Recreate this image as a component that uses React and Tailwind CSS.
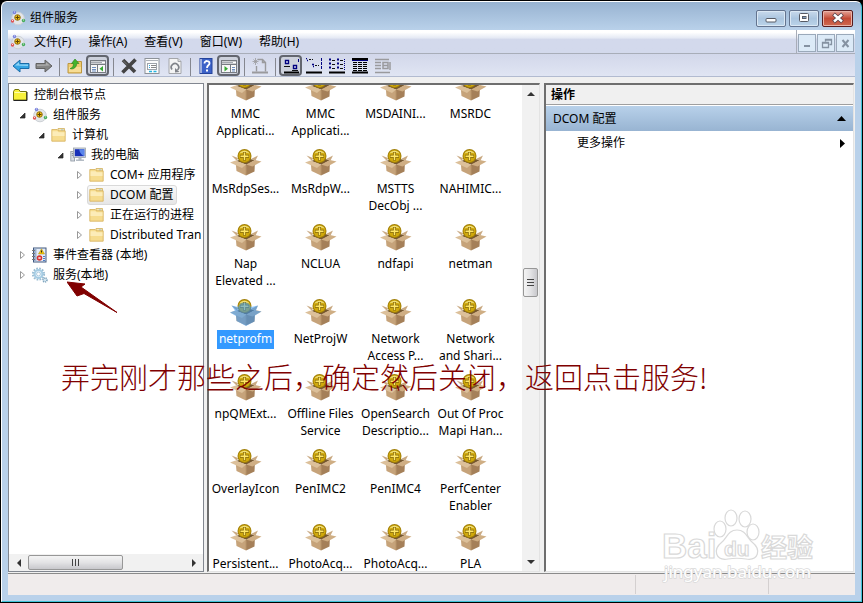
import React from 'react';

const tree = [
  { label: '控制台根节点', icon: 'root', pad: 'pl-[2px]' },
  { label: '组件服务', icon: 'component', pad: 'pl-[7px]', arrow: 'open' },
  { label: '计算机', icon: 'folder', pad: 'pl-[26px]', arrow: 'open' },
  { label: '我的电脑', icon: 'computer', pad: 'pl-[45px]', arrow: 'open' },
  { label: 'COM+ 应用程序', icon: 'folder', pad: 'pl-[64px]', arrow: 'closed' },
  { label: 'DCOM 配置', icon: 'folder', pad: 'pl-[64px]', arrow: 'closed', selected: true },
  { label: '正在运行的进程', icon: 'folder', pad: 'pl-[64px]', arrow: 'closed' },
  { label: 'Distributed Tran', icon: 'folder', pad: 'pl-[64px]', arrow: 'closed' },
  { label: '事件查看器 (本地)', icon: 'events', pad: 'pl-[7px]', arrow: 'closed' },
  { label: '服务(本地)', icon: 'gears', pad: 'pl-[7px]', arrow: 'closed' },
];

const items = [
  ['MMC', 'Applicati...'], ['MMC', 'Applicati...'], ['MSDAINI...'], ['MSRDC'],
  ['MsRdpSes...'], ['MsRdpW...'], ['MSTTS', 'DecObj ...'], ['NAHIMIC...'],
  ['Nap', 'Elevated ...'], ['NCLUA'], ['ndfapi'], ['netman'],
  ['netprofm'], ['NetProjW'], ['Network', 'Access P...'], ['Network', 'and Shari...'],
  ['npQMExt...'], ['Offline Files', 'Service'], ['OpenSearch', 'Descriptio...'], ['Out Of Proc', 'Mapi Han...'],
  ['OverlayIcon'], ['PenIMC2'], ['PenIMC4'], ['PerfCenter', 'Enabler'],
  ['Persistent...'], ['PhotoAcq...'], ['PhotoAcq...'], ['PLA'],
];

const ComponentIcon = () => (
  <svg className="w-4 h-4 shrink-0" viewBox="0 0 16 16">
    <circle cx="8" cy="8.5" r="6.3" fill="#e3e6e9" stroke="#cdd1d6" />
    <circle cx="7.5" cy="7.5" r="2.800" fill="#f2c31c" stroke="#8a6508" strokeWidth=".9" />
    <path d="M7.500 5.500v4M5.500 7.500h4" stroke="#5d4300" />
    <circle cx="4.500" cy="2.500" r="1.700" fill="#7780dd" />
    <circle cx="2.500" cy="11" r="1.700" fill="#e05858" />
    <circle cx="13.500" cy="10.500" r="1.700" fill="#45ad5a" />
    <path d="M4 2h1M2 10.500h1M13 10h1" stroke="#fff" strokeWidth=".8" />
  </svg>
);

const FolderIcon = () => (
  <svg className="w-4 h-4 shrink-0" viewBox="0 0 16 16">
    <path d="M7 1.500h6.500V13H7z" fill="#f8e8b0" stroke="#d0b05e" strokeWidth=".8" />
    <path d="M10 3h2.500" stroke="#8db8de" />
    <path d="M.8 2.500h5.400l1.200 1.300h6.800v10.400H.8z" fill="#f6dc8e" stroke="#d5b05a" strokeWidth=".8" />
    <path d="M1.500 4.200h5l1 1h6V9h-12z" fill="#fcecb8" />
  </svg>
);

const RootIcon = () => (
  <svg className="w-4 h-4 shrink-0" viewBox="0 0 16 16">
    <path d="M.5 4.500l1.300-2h4l1.400 2h6.300v8.500H.5z" fill="#f8f23a" stroke="#77770a" />
    <path d="M1.500 5.500h11" stroke="#ffffb0" />
    <path d="M.5 13.500h13.500V5" fill="none" stroke="#222" />
  </svg>
);

const ComputerIcon = () => (
  <svg className="w-4 h-4 shrink-0" viewBox="0 0 16 16">
    <rect x=".8" y="4.500" width="3.800" height="9.500" fill="#d9dee4" stroke="#8b95a0" strokeWidth=".8" />
    <path d="M1.800 6.500h1.800M1.800 8.300h1.800" stroke="#5b6875" strokeWidth=".7" />
    <rect x="3.500" y="1" width="12" height="9.500" fill="#d5dae0" stroke="#9aa2ab" strokeWidth=".8" />
    <rect x="4.800" y="2.200" width="9.500" height="7" fill="#1730b8" />
    <path d="M9 2.200h5.300v7c-2.500-1-4.500-3.500-5.300-7z" fill="#5b86ea" />
    <path d="M8.500 11h3v1.500H14V14H6v-1.500h2.500z" fill="#b4bcc5" />
  </svg>
);

const EventsIcon = () => (
  <svg className="w-4 h-4 shrink-0" viewBox="0 0 16 16">
    <rect x="1.500" y="1" width="12.500" height="14" fill="#e4ecf7" stroke="#41587f" />
    <rect x="2" y="1.500" width="2.500" height="13" fill="#9db2d0" />
    <path d="M0 3.500h3M0 6.500h3M0 9.500h3M0 12.500h3" stroke="#777" />
    <path d="M9.500 1.800l3 5.200h-6z" fill="#f5c80a" stroke="#a8860a" strokeWidth=".5" />
    <path d="M9.500 3.500v2" stroke="#222" />
    <circle cx="7.500" cy="11" r="2.800" fill="#d63434" />
    <path d="M6.500 10l2 2M8.500 10l-2 2" stroke="#fff" strokeWidth=".9" />
    <path d="M11 9.500h2M11 11.500h2M11 13.500h2" stroke="#4a7bc8" />
  </svg>
);

const GearsIcon = () => (
  <svg className="w-4 h-4 shrink-0" viewBox="0 0 16 16">
    <circle cx="6.500" cy="7" r="5.600" fill="none" stroke="#9bbdd3" strokeWidth="2" strokeDasharray="1.700 1.230" />
    <circle cx="6.500" cy="7" r="3.900" fill="#e6f3fb" stroke="#a5cce3" strokeWidth="2" />
    <circle cx="6.500" cy="7" r="1.900" fill="#fff" stroke="#86aec9" strokeWidth=".6" />
    <circle cx="13" cy="13" r="2" fill="#d7e9f3" stroke="#7fa4bd" strokeWidth="1.600" strokeDasharray="1.100 .7" />
  </svg>
);

const icons = {
  root: RootIcon,
  component: ComponentIcon,
  folder: FolderIcon,
  computer: ComputerIcon,
  events: EventsIcon,
  gears: GearsIcon,
};

const BoxIcon = () => (
  <svg className="w-8 h-[27px]" viewBox="0 0 32 27">
    <path d="M6 12l9-3 10 2-8 5z" fill="#75572f" />
    <path d="M1.500 6.500L8 9l-1 3z" fill="#c9a982" />
    <path d="M21 10l7-3.500-2.500 5z" fill="#c9a982" />
    <circle cx="14.500" cy="7" r="7" fill="#a17f08" />
    <circle cx="14.500" cy="7" r="6" fill="#cfa80c" />
    <path d="M9.500 4.500a6 6 0 0 1 10 0c-3-1.300-7-1.300-10 0z" fill="#f0e07c" />
    <path d="M14.500 3v8.500M10 7.300h9" stroke="#85690a" strokeWidth="3" />
    <path d="M14.500 3.500v7.500M10.500 7.300h8" stroke="#ffe766" strokeWidth="1.500" />
    <path d="M5.500 12L16 16v10.500L6.500 22z" fill="#c6a37a" />
    <path d="M16 16l9-4-.5 10.500-8.500 4z" fill="#a58059" />
    <path d="M0 13.500l5.500-2L16 15.500l-4 3.500z" fill="#dcc09a" />
    <path d="M16 15.500L25 11l6.500 1.500-9 5z" fill="#cfae84" />
    <path d="M16 16.500v9.500" stroke="#b8946a" />
  </svg>
);

const ToolButton = ({ label, pressed, children }) => (
  <button
    type="button"
    aria-label={label}
    className={
      pressed
        ? 'w-[23px] h-[21px] flex items-center justify-center rounded-[4px] border-2 border-[#63666f] bg-[#cdd1dc]'
        : 'w-[23px] h-[21px] flex items-center justify-center'
    }
  >
    <svg className="w-[18px] h-4 shrink-0" viewBox="0 0 18 16">{children}</svg>
  </button>
);

const Separator = () => (
  <div className="w-2 flex justify-center">
    <div className="w-px h-[18px] bg-[#85878f]"></div>
  </div>
);

const Pane = ({ dir }) => (
  <>
    <rect x="1.500" y="2.500" width="15" height="12" fill="#f8f8f8" stroke="#777b82" />
    <path d="M2 4.500h14" stroke="#a5a9b0" strokeWidth="2" />
    <path d="M13 4.500h3" stroke="#fff" />
    <path d="M2 6.500h14" stroke="#777b82" />
    {dir === 'left' ? (
      <>
        <path d="M8.500 7v8" stroke="#777b82" />
        <path d="M3 9.500h4M3 11.500h4M3 13h4" stroke="#6d8ec0" />
        <path d="M14 8v5.500l-3.500-2.700z" fill="#35a832" />
      </>
    ) : (
      <>
        <path d="M10.500 7v8" stroke="#777b82" />
        <path d="M12 9.500h3M12 11.500h3M12 13h3" stroke="#6d8ec0" />
        <path d="M4.500 8v5.500L8 10.800z" fill="#35a832" />
      </>
    )}
  </>
);

const Toolbar = () => (
  <div className="h-[23px] shrink-0 flex items-end pl-px bg-linear-to-b from-[#d2d7ea] to-[#e0e5f3] border-b border-[#b2bbd0]">
    <ToolButton label="后退">
      <path d="M1 8l7-6v3.500h9v5H8V14z" fill="#35a5e4" stroke="#196ca8" />
      <path d="M3 7.500l4-3.300v2.300h9v1.500z" fill="#8fd3f5" />
    </ToolButton>
    <ToolButton label="前进">
      <path d="M17 8l-7-6v3.500H1v5h9V14z" fill="#858585" stroke="#626262" />
      <path d="M15 7.500l-4-3.300v2.300H2v1.500z" fill="#adadad" />
    </ToolButton>
    <Separator />
    <ToolButton label="向上一级">
      <path d="M2 5.500h5l1-2h7.500V15H2z" fill="#efcc71" stroke="#bc9740" />
      <path d="M3 9h12v5H3z" fill="#f7dd94" />
      <path d="M4 10.500c2.500-.5 3.500-2.500 3.500-5H5.500L9 1l4 4.500h-2.300c0 3.500-3 6.500-6.700 5z" fill="#42b52c" stroke="#27821b" strokeWidth=".6" />
    </ToolButton>
    <ToolButton label="显示/隐藏控制台树" pressed>
      <Pane dir="left" />
    </ToolButton>
    <Separator />
    <ToolButton label="删除">
      <path d="M3 2l12 12M15.500 1.500L2.500 14.500" stroke="#444" strokeWidth="3.600" />
      <path d="M3 2.500l4 4" stroke="#777" strokeWidth="1" />
    </ToolButton>
    <ToolButton label="属性">
      <rect x="2" y=".5" width="14" height="15" fill="#fbfbfb" stroke="#8d9298" />
      <path d="M3 2.500h12" stroke="#aeb3b9" />
      <rect x="4.500" y="5.500" width="9" height="6" fill="#fff" stroke="#9da3aa" />
      <path d="M6 7.500h1M6 9.500h1" stroke="#27a7de" />
      <path d="M8 7.500h5M8 9.500h5" stroke="#888" />
      <path d="M6 13.500h3M10.500 13.500h3" stroke="#27b4e0" strokeWidth="1.500" />
    </ToolButton>
    <ToolButton label="刷新">
      <path d="M3 .5h9l3 3v12H3z" fill="#f4f4f4" stroke="#a4a6aa" />
      <path d="M12 .5v3h3" fill="#ddd" stroke="#a4a6aa" />
      <path d="M6 11.500a3.700 3.700 0 1 1 5.500.5" fill="none" stroke="#808389" strokeWidth="1.700" />
      <path d="M9 10v4.500l4.500-.5z" fill="#808389" />
    </ToolButton>
    <Separator />
    <ToolButton label="帮助">
      <rect x="3" y=".5" width="12" height="15" fill="#3c62c8" stroke="#24439a" />
      <path d="M4 1v14" stroke="#c2cde9" strokeWidth="1.500" />
      <path d="M7.500 5.500c0-3.500 5-3 5-.3C12.500 7.500 10 7 10 10" fill="none" stroke="#fff" strokeWidth="1.800" />
      <rect x="9" y="11.500" width="2" height="2" fill="#fff" />
    </ToolButton>
    <ToolButton label="显示/隐藏操作窗格" pressed>
      <Pane dir="right" />
    </ToolButton>
    <Separator />
    <ToolButton label="新建">
      <path d="M5.500 8v5.500M6.500 1.500h5l3 3v9M11.500 1.500v3h3" fill="none" stroke="#9a9a9d" strokeWidth="1.400" />
      <path d="M1 14.500h16" stroke="#9a9a9d" strokeWidth="2" />
      <path d="M4.500 0v7M1.500 3.500h6M2.500 1.500l4 4M6.500 1.500l-4 4" stroke="#9a9a9d" strokeWidth=".8" />
    </ToolButton>
    <Separator />
    <ToolButton label="大图标" pressed>
      <path d="M3.500 2.500h3v3h-3z" fill="#fff" stroke="#000080" strokeWidth="1.400" />
      <path d="M2 8.500h6M10 12.500h6" stroke="#111" />
      <path d="M11.500 7.500h3v3h-3z" fill="#fff" stroke="#000080" strokeWidth="1.400" />
      <path d="M2 14.500h15" stroke="#000" strokeWidth="2" />
      <path d="M16.500 1v3" stroke="#000080" />
    </ToolButton>
    <ToolButton label="小图标">
      <path d="M1 .5h1M2 2.500h1M7 6.500h2M8 8.500h1" stroke="#000080" strokeWidth="1.500" />
      <path d="M4 1.500h4M10 7.500h4" stroke="#111" strokeDasharray="2 1" />
      <path d="M1 14.500h16" stroke="#000" strokeWidth="2" />
      <path d="M16.500 0v12" stroke="#000080" strokeDasharray="3 1" />
    </ToolButton>
    <ToolButton label="列表">
      <path d="M1 1.500h2M1 5.500h2M1 9.500h2M9 1.500h2M9 5.500h2M9 9.500h2" stroke="#000080" strokeWidth="2" />
      <path d="M4 2.500h3M4 6.500h3M4 10.500h3M12 2.500h3M12 6.500h3M12 10.500h3" stroke="#111" />
      <path d="M1 14.500h16" stroke="#000" strokeWidth="2" />
      <path d="M16.500 1v11" stroke="#000080" strokeDasharray="1 1" />
    </ToolButton>
    <ToolButton label="详细信息">
      <path d="M1 1h16" stroke="#000" strokeWidth="2" />
      <path d="M1 2.500h16" stroke="#000080" />
      <path d="M2 4.500h14M2 6.500h14M2 8.500h14M2 10.500h14M2 12.500h14" stroke="#000" strokeDasharray="4 1" />
      <path d="M1 14.500h16" stroke="#000" strokeWidth="2" />
    </ToolButton>
    <ToolButton label="状态">
      <path d="M1 1.500h14M1 4.500h6M1 7.500h6M1 10.500h6M1 14.500h15" stroke="#9a9a9d" strokeWidth="1.500" />
      <path d="M9 4.500h5v6H9zM9 7.500h5M16 4v8" fill="none" stroke="#9a9a9d" strokeWidth="1.500" />
    </ToolButton>
  </div>
);

const TitleBar = () => (
  <div className="h-7 shrink-0 flex items-center justify-between pl-[2px] pr-[2px] pt-[4px]">
    <div className="flex items-center gap-1">
      <ComponentIcon />
      <h1>组件服务</h1>
    </div>
    <div className="flex gap-[3px]">
      <button type="button" aria-label="最小化" className="w-[30px] h-[17px] flex items-center justify-center rounded-[2px] border border-[#64748f] bg-linear-to-b from-[#c9daec] via-[#abc5df] to-[#bbd4ea] shadow-[inset_0_0_0_1px_#dbe8f4]">
        <svg className="w-3 h-3" viewBox="0 0 12 12"><rect x="1" y="6.500" width="10" height="3.500" rx="1" fill="#fff" stroke="#575b65" /></svg>
      </button>
      <button type="button" aria-label="最大化" className="w-[30px] h-[17px] flex items-center justify-center rounded-[2px] border border-[#64748f] bg-linear-to-b from-[#c9daec] via-[#abc5df] to-[#bbd4ea] shadow-[inset_0_0_0_1px_#dbe8f4]">
        <svg className="w-3 h-3" viewBox="0 0 12 12">
          <rect x="1.500" y="1.500" width="9" height="8" rx="1" fill="#fff" stroke="#575b65" />
          <rect x="4.500" y="4.500" width="3.500" height="2" fill="#7f9dbd" stroke="#575b65" />
        </svg>
      </button>
      <button type="button" aria-label="关闭" className="w-[31px] h-[17px] flex items-center justify-center rounded-[2px] border border-[#571b1d] bg-linear-to-b from-[#e4a297] via-[#c34a35] to-[#cf6a51] shadow-[inset_0_0_0_1px_#e9b3a8]">
        <svg className="w-3 h-3" viewBox="0 0 12 12">
          <path d="M1.500 2l9 8M10.500 2l-9 8" stroke="#574048" strokeWidth="4" />
          <path d="M2 2.500l8 7M10 2.500l-8 7" stroke="#fff" strokeWidth="2.400" />
        </svg>
      </button>
    </div>
  </div>
);

const MenuBar = () => (
  <div className="h-6 shrink-0 flex items-center bg-linear-to-b from-white from-10% via-[#e4e9f4] via-35% to-[#d3d9ec] to-40% border-b border-[#a8adb8]">
    <div className="pl-[2px] pr-[3px]"><ComponentIcon /></div>
    <nav className="flex flex-1">
      {['文件(F)', '操作(A)', '查看(V)', '窗口(W)', '帮助(H)'].map((name) => (
        <button key={name} type="button" className="pl-[5px] pr-3">{name}</button>
      ))}
    </nav>
    <div className="h-full flex items-end gap-px pl-px pr-px pb-px border-l border-[#a8adb8]">
      {['M4 10h6', 'M6.500 5.500v-2h6v5h-2M3.500 6.500h6v5h-6zM3 7h7M6 4h7', 'M4.500 4l6 7M10.500 4l-6 7'].map((d, i) => (
        <button key={d} type="button" aria-label={['最小化窗口', '还原窗口', '关闭窗口'][i]} className="w-[18px] h-[18px] flex items-center justify-center border border-[#9aa9ba] bg-[#dceaf7]">
          <svg className="w-[15px] h-[15px]" viewBox="0 0 15 15"><path d={d} fill="none" stroke="#8592a2" strokeWidth={i === 1 ? 1.3 : 2} /></svg>
        </button>
      ))}
    </div>
  </div>
);

const Arrow = ({ kind }) => (
  <span className="w-[14px] shrink-0 flex justify-start pl-[3px]">
    {kind === 'open' && (
      <svg className="w-[7px] h-[7px]" viewBox="0 0 7 7"><path d="M6 1v5H1z" fill="#333" stroke="#222" strokeWidth=".7" /></svg>
    )}
    {kind === 'closed' && (
      <svg className="w-[7px] h-2" viewBox="0 0 7 8"><path d="M1.500.5L5.500 4l-4 3.500z" fill="#fff" stroke="#999" /></svg>
    )}
  </span>
);

const TreePane = () => (
  <aside className="w-[196px] shrink-0 flex flex-col border border-[#828790] bg-white overflow-hidden">
    <ul className="flex-1 pt-px overflow-hidden">
      {tree.map((node) => {
        const Icon = icons[node.icon];
        return (
          <li key={node.label} className={`${node.pad} h-5 flex items-center whitespace-nowrap`}>
            {node.arrow && <Arrow kind={node.arrow} />}
            <span
              className={
                node.selected
                  ? 'h-5 flex items-center gap-[5px] pl-px pr-[3px] rounded-[3px] border border-[#d9d9d9] bg-linear-to-b from-[#f9f9f9] to-[#e6e6e6]'
                  : 'h-5 flex items-center gap-[5px] pl-px pr-[3px] border border-transparent'
              }
            >
              <Icon />
              {node.label}
            </span>
          </li>
        );
      })}
    </ul>
    <div className="h-[17px] shrink-0 flex items-center bg-[#f1f1f1]">
      <button type="button" aria-label="向左滚动" className="w-[19px] flex justify-center">
        <svg className="w-1 h-2" viewBox="0 0 4 8"><path d="M4 0v8L0 4z" fill="#333" /></svg>
      </button>
      <div className="flex-1 flex">
        <div className="w-[61%] h-[15px] flex items-center justify-center gap-[2px] rounded-[2px] border border-[#979797] bg-linear-to-b from-[#f4f4f4] via-[#e3e3e5] to-[#c8c8cc]">
          <i className="w-px h-[7px] bg-[#444]"></i>
          <i className="w-px h-[7px] bg-[#444]"></i>
          <i className="w-px h-[7px] bg-[#444]"></i>
        </div>
      </div>
      <button type="button" aria-label="向右滚动" className="w-[19px] flex justify-center">
        <svg className="w-1 h-2" viewBox="0 0 4 8"><path d="M0 0v8l4-4z" fill="#333" /></svg>
      </button>
    </div>
  </aside>
);

const IconPane = () => (
  <main className="w-[333px] shrink-0 flex border-t-2 border-l-2 border-[#6e6e6e] border-r border-r-[#e3e3e3] border-b border-b-[#e3e3e3] bg-white overflow-hidden">
    <div className="flex-1 overflow-hidden">
      <div className="grid grid-cols-[repeat(4,75px)] auto-rows-[75px] -mt-[11px] -ml-px">
        {items.map((lines, i) => {
          const selected = lines[0] === 'netprofm';
          return (
            <div key={i} className="flex flex-col items-center text-center leading-[17px] whitespace-nowrap">
              <div className={selected ? 'relative mb-1' : 'mb-1'}>
                <BoxIcon />
                {selected && (
                  <svg className="absolute inset-0 w-8 h-[27px]" viewBox="0 0 32 27">
                    <path d="M0 13.500l5-2-3.500-5L8 8a7 7 0 0 1 13 0l7-1.500-2 5 5.500 1-6.500 4-.5 6-8.500 4.500-9.500-5-.5-5z" fill="#3399ff" opacity=".55" />
                  </svg>
                )}
              </div>
              {lines.map((line) => (
                <div key={line} className={selected ? 'bg-[#3399ff] text-white px-[2px] h-[19px] leading-[17px]' : ''}>{line}</div>
              ))}
            </div>
          );
        })}
      </div>
    </div>
    <div className="w-[17px] shrink-0 flex flex-col items-center bg-[#f1f1f1] py-[7px]">
      <button type="button" aria-label="向上滚动">
        <svg className="w-2 h-1" viewBox="0 0 8 4"><path d="M0 4h8L4 0z" fill="#333" /></svg>
      </button>
      <div className="grow-[17]"></div>
      <div className="w-[15px] h-[29px] flex flex-col items-center justify-center gap-[2px] rounded-[2px] border border-[#979797] bg-linear-to-r from-[#f4f4f4] via-[#e3e3e5] to-[#c8c8cc]">
        <i className="w-[7px] h-px bg-[#444]"></i>
        <i className="w-[7px] h-px bg-[#444]"></i>
        <i className="w-[7px] h-px bg-[#444]"></i>
      </div>
      <div className="grow-[26]"></div>
      <button type="button" aria-label="向下滚动">
        <svg className="w-2 h-1" viewBox="0 0 8 4"><path d="M0 0h8L4 4z" fill="#333" /></svg>
      </button>
    </div>
  </main>
);

const ActionsPane = () => (
  <section className="flex-1 min-w-0 ml-px border-t-2 border-l-2 border-[#6e6e6e] border-r border-r-[#e3e3e3] border-b border-b-[#e3e3e3] bg-white">
    <h2 className="h-5 flex items-center pl-[5px] font-bold bg-[#f0f0f0] border-b border-[#9f9f9f]">操作</h2>
    <button type="button" className="w-full h-[25px] mt-px flex items-center justify-between pl-[7px] pr-[7px] bg-linear-to-b from-[#b8d1ea] to-[#98b4d2]">
      DCOM 配置
      <svg className="w-[9px] h-[5px]" viewBox="0 0 9 5"><path d="M0 5h9L4.500 0z" /></svg>
    </button>
    <button type="button" className="w-full h-6 flex items-center justify-between pl-[31px] pr-2">
      更多操作
      <svg className="w-[5px] h-[9px]" viewBox="0 0 5 9"><path d="M0 0v9l5-4.500z" /></svg>
    </button>
  </section>
);

const Watermark = () => (
  <svg className="absolute right-[41px] bottom-[14px] w-[160px] h-[80px] pointer-events-none" viewBox="0 0 160 80">
    <g fill="#fff" stroke="#d9d9d9" strokeWidth="1.200">
      <ellipse cx="60" cy="22" rx="6" ry="8" />
      <ellipse cx="71" cy="11" rx="6" ry="8" />
      <ellipse cx="85" cy="12" rx="6" ry="8" />
      <ellipse cx="93" cy="25" rx="6" ry="8" />
      <path d="M77 23c-9 0-10 8-15 12-10 8-6 19 6 17 6-1 12-1 18 0 12 2 16-9 6-17-5-4-6-12-15-12z" />
      <text x="2" y="51" className="font-['Liberation_Sans'] font-bold text-[35px]">Bai</text>
      <text x="64" y="49" className="font-['Liberation_Sans'] font-bold text-[21px]">du</text>
      <text x="101" y="50" className="font-['Noto_Sans_CJK_SC'] font-bold text-[26px]">经验</text>
    </g>
    <text x="4" y="71" fill="#fff" stroke="#d9d9d9" strokeWidth="1.500" paintOrder="stroke" className="font-['Noto_Sans'] text-[17px]">jingyan.baidu.com</text>
  </svg>
);

const App = () => {
  return (
    <div className="h-screen bg-black p-px font-['Noto_Sans','Noto_Sans_CJK_SC',sans-serif] text-xs text-black">
      <div className="relative h-full flex flex-col rounded-t-[6px] border border-t-white border-l-white border-r-[#3fc3d8] border-b-[#3fc3d8] bg-linear-to-b from-[#98b3d1] to-[#b9d1ea] to-[28px] px-[6px] pb-[6px]">
        <TitleBar />
        <div className="flex-1 min-h-0 flex flex-col bg-[#f0f0f0]">
          <MenuBar />
          <Toolbar />
          <div className="flex-1 min-h-0 flex gap-[3px] pt-[6px] pr-px">
            <TreePane />
            <IconPane />
            <ActionsPane />
          </div>
          <footer className="h-[22px] shrink-0 flex mt-px border-t border-[#8b8b8b] bg-[#f0ecec]">
            <div className="flex-1"></div>
            <div className="w-[133px] my-px border-l border-[#d4d0d0]"></div>
            <div className="w-[87px] my-px border-l border-[#d4d0d0]"></div>
          </footer>
        </div>

        <svg className="absolute left-[65px] top-[279px] w-[51px] h-[35px] pointer-events-none" viewBox="0 0 51 35">
          <path d="M0 1l18 2-4 3 36 25.500-33-19-7 2.500z" fill="#800000" stroke="#800000" strokeLinejoin="round" />
        </svg>
        <p className="absolute left-[59px] top-[352px] text-[29px] leading-[44px] font-light whitespace-nowrap text-[#800000] font-['Noto_Sans_CJK_SC',sans-serif] pointer-events-none">
          弄完刚才那些之后，确定然后关闭，返回点击服务!
        </p>
        <Watermark />
      </div>
    </div>
  );
};

export default App;
